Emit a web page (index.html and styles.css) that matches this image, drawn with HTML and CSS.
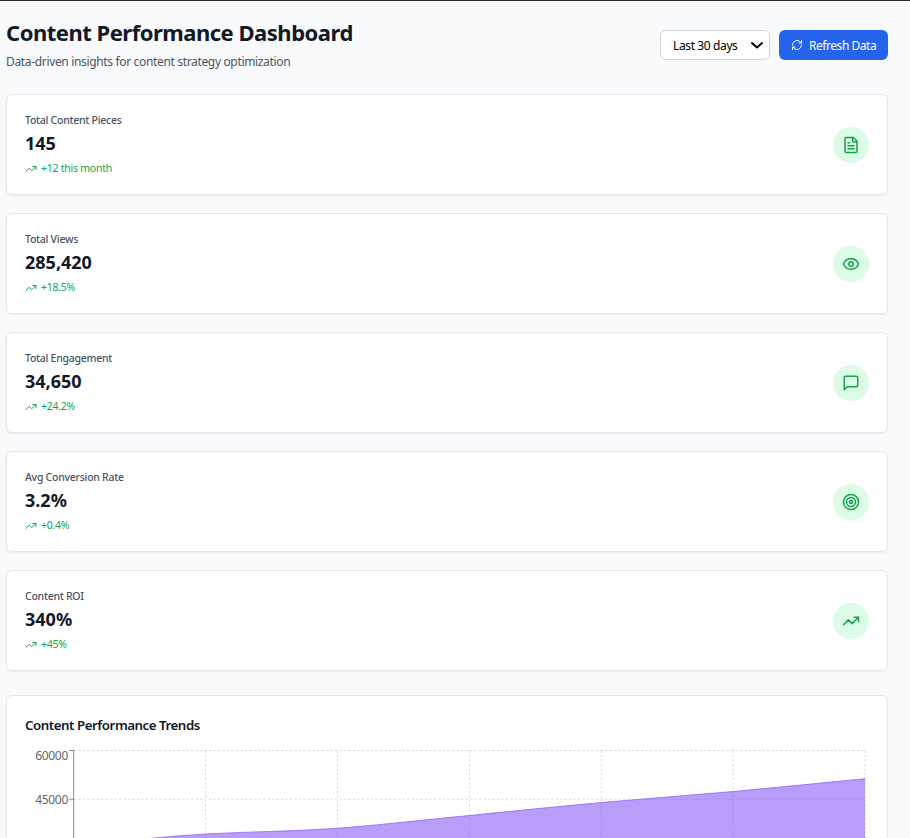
FILE: index.html
```html
<!DOCTYPE html>
<html lang="en">
<head>
<meta charset="utf-8">
<title>Content Performance Dashboard</title>
<link rel="stylesheet" href="styles.css">
</head>
<body>
<svg class="sprite" aria-hidden="true">
  <symbol id="trend" viewBox="0 0 24 24"><path d="M22 7 13.5 15.5 8.5 10.5 2 17"/><path d="M16 7h6v6"/></symbol>
  <symbol id="file" viewBox="0 0 24 24"><path d="M15 2H6a2 2 0 0 0-2 2v16a2 2 0 0 0 2 2h12a2 2 0 0 0 2-2V7Z"/><path d="M14 2v4a2 2 0 0 0 2 2h4M10 9H8M16 13H8M16 17H8"/></symbol>
  <symbol id="eye" viewBox="0 0 24 24"><path d="M2.06 12.35a1 1 0 0 1 0-.7 10.75 10.75 0 0 1 19.88 0 1 1 0 0 1 0 .7 10.75 10.75 0 0 1-19.88 0"/><circle cx="12" cy="12" r="3"/></symbol>
  <symbol id="message" viewBox="0 0 24 24"><path d="M21 15a2 2 0 0 1-2 2H7l-4 4V5a2 2 0 0 1 2-2h14a2 2 0 0 1 2 2z"/></symbol>
  <symbol id="target" viewBox="0 0 24 24"><circle cx="12" cy="12" r="10"/><circle cx="12" cy="12" r="6"/><circle cx="12" cy="12" r="2"/></symbol>
  <symbol id="refresh" viewBox="0 0 24 24"><path d="M3 12a9 9 0 0 1 9-9 9.75 9.75 0 0 1 6.74 2.74L21 8"/><path d="M21 3v5h-5M21 12a9 9 0 0 1-9 9 9.75 9.75 0 0 1-6.74-2.74L3 16"/><path d="M8 16H3v5"/></symbol>
</svg>
<main class="page">
  <header class="header">
    <div>
      <h1 class="title">Content Performance Dashboard</h1>
      <p class="subtitle">Data-driven insights for content strategy optimization</p>
    </div>
    <div class="actions">
      <div class="select"><span>Last 30 days</span><svg class="chevron" viewBox="0 0 14 9"><path d="M2 2l5 4.5L12 2"/></svg></div>
      <button class="button"><svg class="icon icon-sm"><use href="#refresh"/></svg><span>Refresh Data</span></button>
    </div>
  </header>
  <section class="cards">
    <article class="card metric"><div><p class="label">Total Content Pieces</p><p class="value">145</p><p class="change"><svg class="icon icon-sm"><use href="#trend"/></svg><span>+12 this month</span></p></div><div class="badge"><svg class="icon"><use href="#file"/></svg></div></article>
    <article class="card metric"><div><p class="label">Total Views</p><p class="value">285,420</p><p class="change"><svg class="icon icon-sm"><use href="#trend"/></svg><span>+18.5%</span></p></div><div class="badge"><svg class="icon"><use href="#eye"/></svg></div></article>
    <article class="card metric"><div><p class="label">Total Engagement</p><p class="value">34,650</p><p class="change"><svg class="icon icon-sm"><use href="#trend"/></svg><span>+24.2%</span></p></div><div class="badge"><svg class="icon"><use href="#message"/></svg></div></article>
    <article class="card metric"><div><p class="label">Avg Conversion Rate</p><p class="value">3.2%</p><p class="change"><svg class="icon icon-sm"><use href="#trend"/></svg><span>+0.4%</span></p></div><div class="badge"><svg class="icon"><use href="#target"/></svg></div></article>
    <article class="card metric"><div><p class="label">Content ROI</p><p class="value">340%</p><p class="change"><svg class="icon icon-sm"><use href="#trend"/></svg><span>+45%</span></p></div><div class="badge"><svg class="icon"><use href="#trend"/></svg></div></article>
  </section>
  <section class="card chart-card">
    <h2 class="chart-title">Content Performance Trends</h2>
    <svg class="chart" width="844" height="225" viewBox="0 0 844 225">
      <g class="grid">
        <path d="M49 4.5H840M49 53.25H840M49 102H840"/>
        <path d="M180.5 4.5V200M312.5 4.5V200M444.5 4.5V200M576.3 4.5V200M708.2 4.5V200M840 4.5V200"/>
      </g>
      <path class="area" d="M49 100C93 96 136.500 90.500 180.500 88C224.500 85.500 268.500 85.500 312.500 82.300C356.500 79 400.500 73.500 444.500 69.500C488.500 65 532.300 60.500 576.300 56.500C620.300 52.500 664.200 49.500 708.200 45.500C752.200 41.500 796 37 840 32.700V200H49Z"/>
      <path class="line" d="M49 100C93 96 136.500 90.500 180.500 88C224.500 85.500 268.500 85.500 312.500 82.300C356.500 79 400.500 73.500 444.500 69.500C488.500 65 532.300 60.500 576.300 56.500C620.300 52.500 664.200 49.500 708.200 45.500C752.200 41.500 796 37 840 32.700"/>
      <path class="axis" d="M48.700 4.500V200M44 4.500H49M44 53.250H49"/>
      <g class="ticks"><text x="43" y="14">60000</text><text x="43" y="58">45000</text></g>
    </svg>
  </section>
</main>
</body>
</html>
```
FILE: styles.css
```css
* { box-sizing: border-box; }
html { height: 100%; overflow: hidden; }
body { margin: 0; height: 838px; overflow: hidden; background: #f9fafb; color: #111827; font-family: "Noto Sans", sans-serif; border-top: 1px solid #29292c; }
h1, h2, p { margin: 0; }
.sprite { position: absolute; width: 0; height: 0; }
.page { padding: 18px 22px 0 6px; }
.header { display: flex; justify-content: space-between; align-items: center; height: 52px; margin-bottom: 23px; }
.title { font-size: 22px; line-height: 26px; font-weight: 700; letter-spacing: -0.49px; white-space: nowrap; }
.subtitle { margin-top: 8px; font-size: 12px; line-height: 18px; color: #4b5563; letter-spacing: -0.34px; }
.actions { display: flex; gap: 9px; align-items: center; }
.select { display: flex; align-items: center; justify-content: space-between; width: 110px; height: 30px; padding: 0 5px 0 12px; border: 1px solid #d1d5db; border-radius: 6px; background: #fff; color: #000; font-size: 12px; letter-spacing: -0.38px; white-space: nowrap; }
.chevron { width: 14px; height: 9px; margin-top: 1px; fill: none; stroke: #000; stroke-width: 2; stroke-linecap: round; stroke-linejoin: round; }
.button { display: flex; align-items: center; gap: 6px; width: 109px; height: 30px; padding: 0 0 0 12px; border: 0; border-radius: 6px; background: #2563eb; color: #fff; font: 12px "Noto Sans", sans-serif; letter-spacing: -0.45px; white-space: nowrap; }
.icon { width: 18px; height: 18px; flex: none; fill: none; stroke: currentColor; stroke-width: 2; stroke-linecap: round; stroke-linejoin: round; }
.icon-sm { width: 12px; height: 12px; }
.cards { display: grid; gap: 18px; }
.card { background: #fff; border: 1px solid #e5e7eb; border-radius: 6px; box-shadow: 0 1px 2px rgba(0, 0, 0, .05); }
.metric { display: flex; justify-content: space-between; align-items: center; height: 101px; padding: 0 18px; }
.label { font-size: 10.5px; line-height: 15px; font-weight: 500; color: #4b5563; letter-spacing: -0.26px; }
.value { margin-top: 3px; font-size: 18px; line-height: 24px; font-weight: 700; letter-spacing: 0; }
.change { display: flex; align-items: center; gap: 4px; margin-top: 7px; font-size: 10.5px; line-height: 15px; color: #16a34a; letter-spacing: -0.25px; }
.change span { margin-top: -1px; }
.badge { display: grid; place-items: center; width: 36px; height: 36px; border-radius: 50%; background: #dcfce7; color: #16a34a; }
.chart-card { margin-top: 24px; padding: 19px 18px 18px; height: 290px; }
.chart-title { font-size: 13.3px; line-height: 21px; font-weight: 600; letter-spacing: -0.46px; }
.chart { display: block; margin-top: 10px; }
.grid { fill: none; stroke: #ccc; stroke-dasharray: 2.25 2.25; stroke-width: .75; }
.area { fill: #8b5cf6; fill-opacity: .6; }
.line { fill: none; stroke: #8b5cf6; stroke-width: .75; }
.axis { fill: none; stroke: #666; stroke-width: .75; }
.ticks { font-size: 12px; fill: #666; text-anchor: end; letter-spacing: -0.3px; }
```
